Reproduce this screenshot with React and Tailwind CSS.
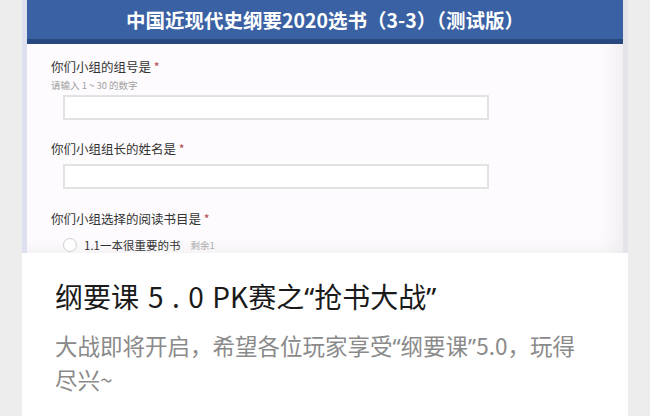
import React from "react";

const cjk = { fontFamily: '"Noto Sans CJK SC", "Noto Sans", sans-serif' };
const latin = { fontFamily: '"Noto Sans", "Liberation Sans", sans-serif' };

function Q({ children }) {
  return <span style={latin}>{children}</span>;
}

function Label({ text }) {
  return (
    <div className="text-[12.5px] leading-[18px] text-[#333]">
      {text} <span className="text-[#b3474f]">*</span>
    </div>
  );
}

function FormShot() {
  return (
    <div className="h-[253px] flex flex-col border-l-[5px] border-r-[5px] border-l-[#dde0ee] border-r-[#e3e3ea] overflow-hidden">
      <div className="h-[43px] bg-[#3a61a3] flex items-center justify-center">
        <span className="text-white font-bold text-[19.5px] leading-none">
          中国近现代史纲要2020选书（3-3）（测试版）
        </span>
      </div>
      <div className="h-[5px] bg-[#28497f]" />
      <div className="flex-1 bg-[#fdfbfd] pl-[24px] pt-[14px] shadow-[inset_-22px_-14px_22px_-16px_rgba(0,0,0,0.07)]">
        <Label text="你们小组的组号是" />
        <div className="mt-[2px] text-[9.5px] leading-[14px] text-[#a0a0a0]">请输入 1 ~ 30 的数字</div>
        <div className="mt-[3px] ml-[12px] w-[426px] h-[25px] bg-white border-2 border-[#e2e2e2]" />
        <div className="mt-[20px]">
          <Label text="你们小组组长的姓名是" />
        </div>
        <div className="mt-[6px] ml-[12px] w-[426px] h-[25px] bg-white border-2 border-[#e2e2e2]" />
        <div className="mt-[21px]">
          <Label text="你们小组选择的阅读书目是" />
        </div>
        <div className="mt-[9px] ml-[12px] flex items-center gap-[7px]">
          <div className="w-[14px] h-[14px] rounded-full border border-[#cfcfcf] bg-white" />
          <span className="text-[11.5px] leading-[16px] text-[#333]">1.1一本很重要的书</span>
          <span className="text-[9.5px] leading-[16px] text-[#aaa] ml-[3px]">剩余1</span>
        </div>
      </div>
    </div>
  );
}

export default function App() {
  return (
    <div className="w-[650px] h-[416px] bg-[#ededed] px-[22px] overflow-hidden" style={cjk}>
      <div className="h-full bg-white flex flex-col">
        <FormShot />
        <div className="px-[33px] pt-[25px]">
          <div className="text-[28px] leading-[36px] text-[#1a1a1a] whitespace-nowrap">
            纲要课<span className="ml-[9px] mr-[-6px] tracking-[0.3em]">5.0</span> PK赛之<Q>“</Q>抢书大战<Q>”</Q>
          </div>
          <div className="mt-[14px] text-[22.5px] leading-[33px] text-[#8a8a8a]">
            大战即将开启，希望各位玩家享受<Q>“</Q>纲要课<Q>”</Q>5.0，玩得尽兴~
          </div>
        </div>
      </div>
    </div>
  );
}
